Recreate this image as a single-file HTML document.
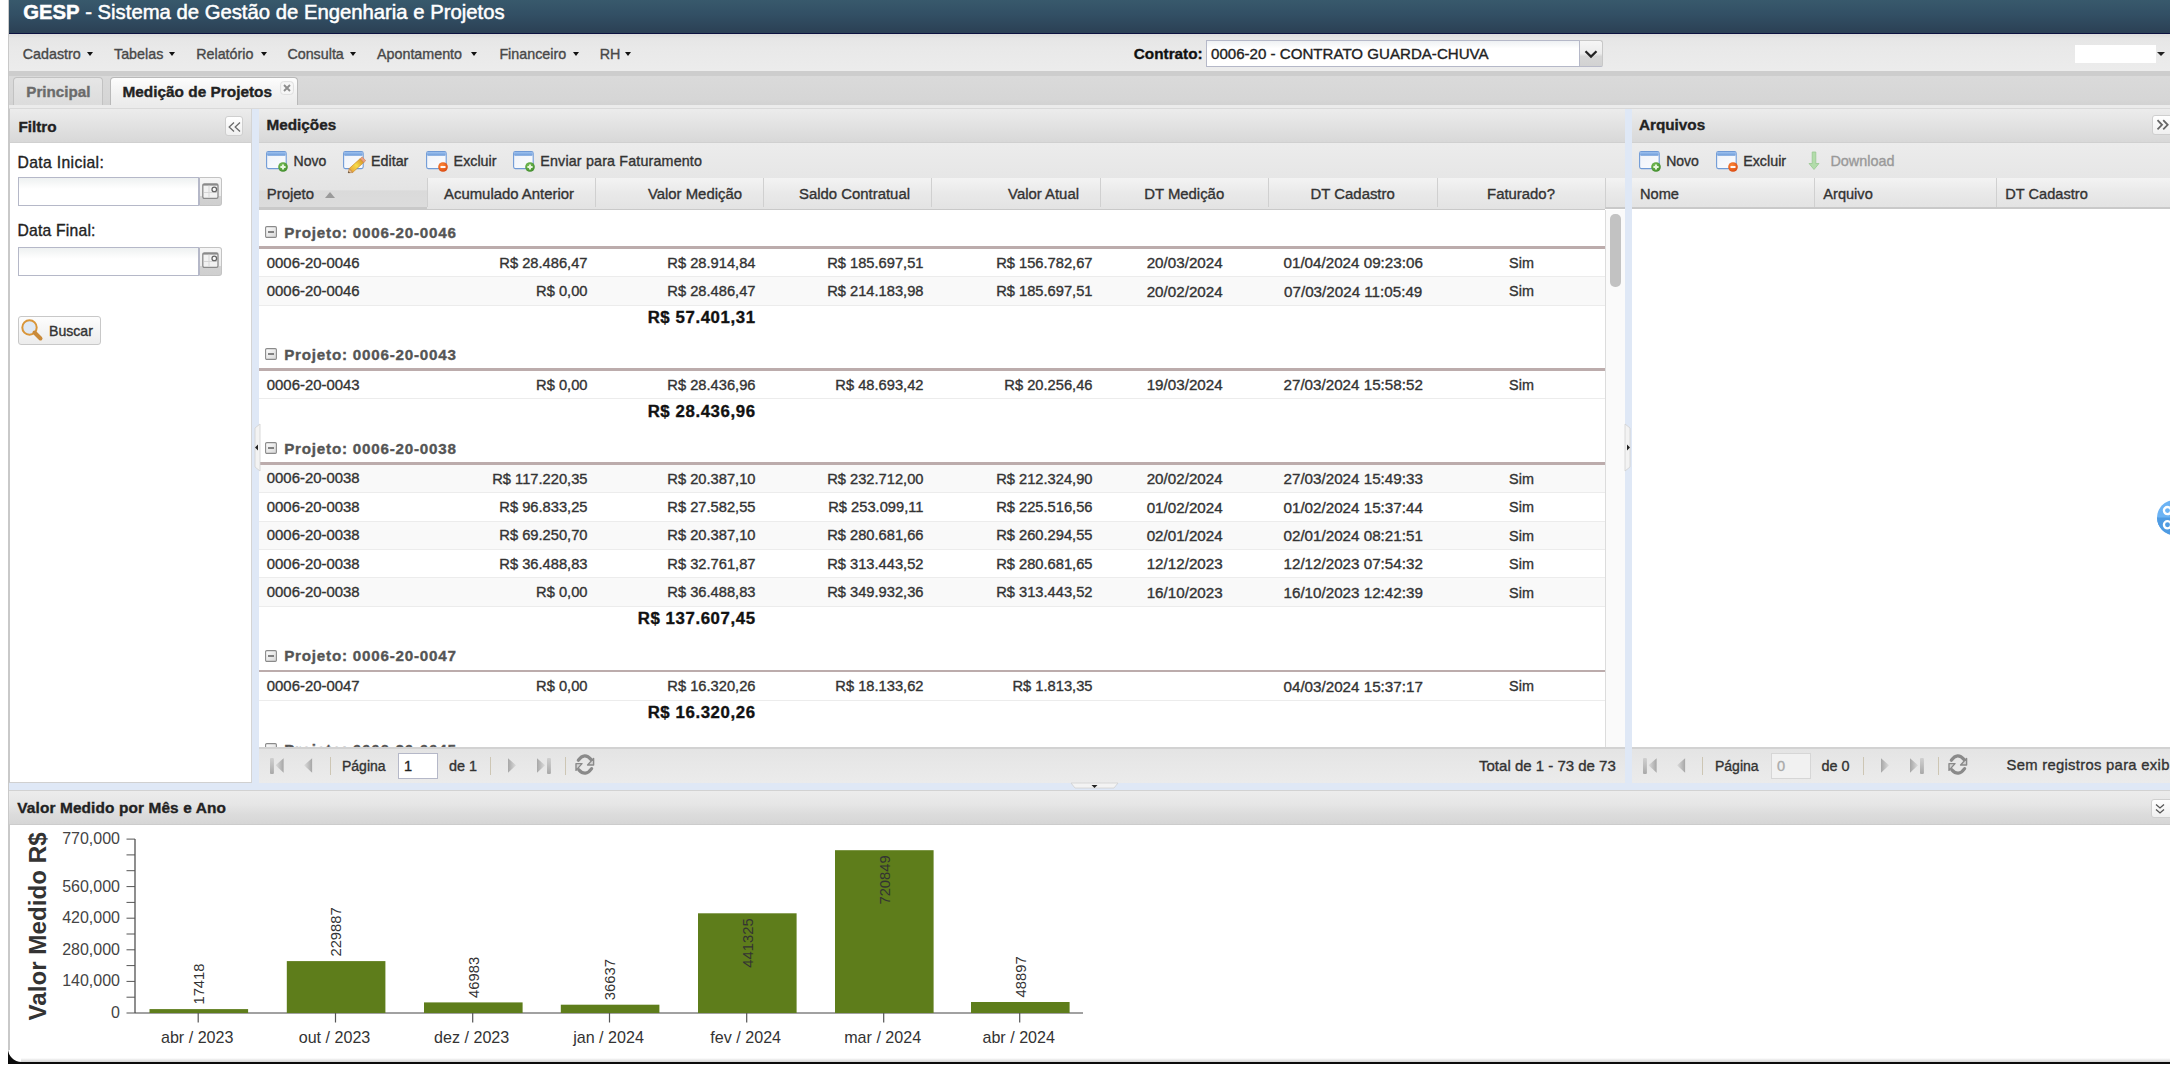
<!DOCTYPE html>
<html><head><meta charset="utf-8"><title>GESP</title>
<style>
html,body{margin:0;padding:0;}
body{width:2170px;height:1070px;position:relative;overflow:hidden;background:#fff;font-family:"Liberation Sans", sans-serif;}
.t{position:absolute;white-space:nowrap;-webkit-text-stroke:0.35px currentColor;}
.b{position:absolute;}
svg.b{overflow:visible;}
</style></head><body>
<div class="b" style="left:8.00px;top:0.00px;width:2162.00px;height:1064.00px;background:#0b0b0b;"></div>
<div class="b" style="left:8px;top:0;width:2162px;height:1061.6px;background:#fff;border-bottom-left-radius:13.5px;overflow:hidden;">
</div>
<div class="b" style="left:21.00px;top:1057.50px;width:2149.00px;height:4.10px;background:linear-gradient(#fff,#d2d2d2);"></div>
<div class="b" style="left:8.00px;top:0.00px;width:2.00px;height:1050.00px;background:#c9c9c9;"></div>
<div class="b" style="left:9.00px;top:0.00px;width:2161.00px;height:34.00px;background:linear-gradient(#38596c,#324f64 45%,#2b4054);border-bottom:1.5px solid #0c1240;box-sizing:border-box;"></div>
<div class="t" style="top:0.39px;font-size:20.3px;line-height:24.36px;color:#fff;left:23.20px;-webkit-text-stroke:0.5px #fff;"><b>GESP</b> - Sistema de Gestão de Engenharia e Projetos</div>
<div class="b" style="left:9.00px;top:34.00px;width:2161.00px;height:37.00px;background:linear-gradient(#dcdcdc,#e6e6e6 12%,#e9e9e9 40%,#ececec);"></div>
<div class="t" style="top:45.77px;font-size:14.3px;line-height:17.16px;color:#484848;left:22.80px;">Cadastro</div>
<div class="b" style="left:86.7px;top:52.2px;width:0;height:0;border-left:3.5px solid transparent;border-right:3.5px solid transparent;border-top:4px solid #111;"></div>
<div class="t" style="top:45.77px;font-size:14.3px;line-height:17.16px;color:#484848;left:114.00px;">Tabelas</div>
<div class="b" style="left:168.8px;top:52.2px;width:0;height:0;border-left:3.5px solid transparent;border-right:3.5px solid transparent;border-top:4px solid #111;"></div>
<div class="t" style="top:45.77px;font-size:14.3px;line-height:17.16px;color:#484848;left:196.20px;">Relatório</div>
<div class="b" style="left:261px;top:52.2px;width:0;height:0;border-left:3.5px solid transparent;border-right:3.5px solid transparent;border-top:4px solid #111;"></div>
<div class="t" style="top:45.77px;font-size:14.3px;line-height:17.16px;color:#484848;left:287.40px;">Consulta</div>
<div class="b" style="left:349.8px;top:52.2px;width:0;height:0;border-left:3.5px solid transparent;border-right:3.5px solid transparent;border-top:4px solid #111;"></div>
<div class="t" style="top:45.77px;font-size:14.3px;line-height:17.16px;color:#484848;left:377.00px;">Apontamento</div>
<div class="b" style="left:471.4px;top:52.2px;width:0;height:0;border-left:3.5px solid transparent;border-right:3.5px solid transparent;border-top:4px solid #111;"></div>
<div class="t" style="top:45.77px;font-size:14.3px;line-height:17.16px;color:#484848;left:499.40px;">Financeiro</div>
<div class="b" style="left:573px;top:52.2px;width:0;height:0;border-left:3.5px solid transparent;border-right:3.5px solid transparent;border-top:4px solid #111;"></div>
<div class="t" style="top:45.77px;font-size:14.3px;line-height:17.16px;color:#484848;left:599.80px;">RH</div>
<div class="b" style="left:625px;top:52.2px;width:0;height:0;border-left:3.5px solid transparent;border-right:3.5px solid transparent;border-top:4px solid #111;"></div>
<div class="t" style="top:44.92px;font-size:15.3px;line-height:18.36px;color:#111;font-weight:bold;left:1133.80px;">Contrato:</div>
<div class="b" style="left:1205.70px;top:40.40px;width:374.00px;height:26.20px;background:linear-gradient(#eef1f3,#fff 30%);border:1px solid #b5b8c8;border-right:none;box-sizing:border-box;"></div>
<div class="t" style="top:45.31px;font-size:15.1px;line-height:18.12px;color:#222;left:1211.00px;">0006-20 - CONTRATO GUARDA-CHUVA</div>
<div class="b" style="left:1579.20px;top:40.40px;width:23.50px;height:26.20px;background:linear-gradient(#f6f6f6,#ececec 50%,#d6d6d6 62%,#d2d2d2);border:1px solid #c8c8c8;border-left:1px solid #b5b8c8;border-bottom:1px solid #b8bac8;border-radius:0 3px 2px 0;box-sizing:border-box;"></div>
<svg class="b" style="left:1583.5px;top:49px" width="14" height="10" viewBox="0 0 14 10"><path d="M1.5 2.2 L7 7.6 L12.5 2.2" fill="none" stroke="#222" stroke-width="2.2"/></svg>
<div class="b" style="left:2075.00px;top:44.60px;width:80.50px;height:18.50px;background:#fff;"></div>
<div class="b" style="left:2157px;top:52px;width:0;height:0;border-left:4px solid transparent;border-right:4px solid transparent;border-top:4.5px solid #222;"></div>
<div class="b" style="left:9.00px;top:71.00px;width:2161.00px;height:4.50px;background:#cdcdcd;"></div>
<div class="b" style="left:9.00px;top:75.50px;width:2161.00px;height:29.50px;background:linear-gradient(#dadada,#d6d6d6 80%,#d2d2d2);"></div>
<div class="b" style="left:9.00px;top:104.60px;width:2161.00px;height:3.40px;background:#ebebeb;"></div>
<div class="b" style="left:9.00px;top:107.80px;width:2161.00px;height:1.20px;background:#d9d9d9;"></div>
<div class="b" style="left:12.50px;top:77.00px;width:90.70px;height:27.60px;background:linear-gradient(#e6e6e6,#dcdcdc);border:1px solid #c2c2c2;border-bottom:none;border-radius:4px 4px 0 0;box-sizing:border-box;"></div>
<div class="t" style="top:82.91px;font-size:15.2px;line-height:18.24px;color:#6b6b6b;font-weight:bold;left:26.30px;">Principal</div>
<div class="b" style="left:109.90px;top:76.80px;width:188.40px;height:27.80px;background:linear-gradient(#fdfdfd,#f1f1f1 60%,#ebebeb);border:1.2px solid #b9b9b9;border-bottom:none;border-radius:4px 4px 0 0;box-sizing:border-box;"></div>
<div class="t" style="top:82.72px;font-size:15.4px;line-height:18.48px;color:#222;font-weight:bold;left:122.40px;">Medição de Projetos</div>
<svg class="b" style="left:280.2px;top:81.3px" width="14" height="14" viewBox="0 0 14 14"><rect x="0.6" y="0.6" width="12.8" height="12.8" rx="3" fill="#f6f6f6" stroke="#dedede" stroke-width="1"/><path d="M4 4 L10 10 M10 4 L4 10" stroke="#8d8d8d" stroke-width="1.9"/></svg>
<div class="b" style="left:9.00px;top:109.00px;width:2161.00px;height:682.00px;background:#dfe8f6;"></div>
<div class="b" style="left:9.00px;top:109.00px;width:242.50px;height:674.00px;background:#fff;border-left:1px solid #c9c9c9;border-bottom:1.5px solid #d0d0d0;border-right:1px solid #d4d4d4;box-sizing:border-box;"></div>
<div class="b" style="left:10.00px;top:109.00px;width:241.00px;height:34.30px;background:linear-gradient(#ececec,#e2e2e2 50%,#d8d8d8);border-bottom:1px solid #d0d0d0;box-sizing:border-box;"></div>
<div class="t" style="top:118.02px;font-size:15.3px;line-height:18.36px;color:#222;font-weight:bold;left:18.40px;">Filtro</div>
<div class="b" style="left:225.00px;top:116.00px;width:18.40px;height:20.00px;background:linear-gradient(#fff,#f0f0f0);border:1px solid #cfcfcf;border-radius:3px;box-sizing:border-box;"></div>
<svg class="b" style="left:227.5px;top:121.5px" width="13" height="10" viewBox="0 0 13 10"><path d="M6 0.5 L1.2 5 L6 9.5 M12 0.5 L7.2 5 L12 9.5" fill="none" stroke="#6a6a6a" stroke-width="1.3"/></svg>
<div class="t" style="top:153.64px;font-size:15.7px;line-height:18.84px;color:#222;letter-spacing:0.35px;left:17.60px;">Data Inicial:</div>
<div class="t" style="top:222.14px;font-size:15.7px;line-height:18.84px;color:#222;letter-spacing:0.2px;left:17.60px;">Data Final:</div>
<div class="b" style="left:17.60px;top:177.00px;width:181.50px;height:29.20px;background:linear-gradient(#eef1f1,#fff 40%);border:1px solid #b5b8c8;box-sizing:border-box;"></div>
<div class="b" style="left:198.50px;top:177.00px;width:23.80px;height:29.20px;background:linear-gradient(#f6f6f6,#ececec 66%,#d2d2d2 68%,#cfcfcf);border:1px solid #c3c3c3;border-left:1px solid #b5b8c8;border-radius:0 3px 3px 0;box-sizing:border-box;"></div>
<svg class="b" style="left:202px;top:182.8px" width="17" height="16" viewBox="0 0 17 16"><rect x="0.8" y="0.8" width="15.2" height="14.6" rx="1.6" fill="#f2f2f2" stroke="#8a8a8a" stroke-width="1.3"/><rect x="1" y="1" width="15" height="1.6" fill="#8a8a8a"/><path d="M7 2.6 V15 M2 9.5 H15" stroke="#d6d6d6" stroke-width="1"/><circle cx="12.3" cy="6.4" r="2.3" fill="#fafafa" stroke="#666" stroke-width="1.3"/></svg>
<div class="b" style="left:17.60px;top:246.60px;width:181.50px;height:29.20px;background:linear-gradient(#eef1f1,#fff 40%);border:1px solid #b5b8c8;box-sizing:border-box;"></div>
<div class="b" style="left:198.50px;top:246.60px;width:23.80px;height:29.20px;background:linear-gradient(#f6f6f6,#ececec 66%,#d2d2d2 68%,#cfcfcf);border:1px solid #c3c3c3;border-left:1px solid #b5b8c8;border-radius:0 3px 3px 0;box-sizing:border-box;"></div>
<svg class="b" style="left:202px;top:252.4px" width="17" height="16" viewBox="0 0 17 16"><rect x="0.8" y="0.8" width="15.2" height="14.6" rx="1.6" fill="#f2f2f2" stroke="#8a8a8a" stroke-width="1.3"/><rect x="1" y="1" width="15" height="1.6" fill="#8a8a8a"/><path d="M7 2.6 V15 M2 9.5 H15" stroke="#d6d6d6" stroke-width="1"/><circle cx="12.3" cy="6.4" r="2.3" fill="#fafafa" stroke="#666" stroke-width="1.3"/></svg>
<div class="b" style="left:17.60px;top:315.50px;width:83.30px;height:29.50px;background:linear-gradient(#fdfdfd,#ececec);border:1px solid #c8c8c8;border-radius:3px;box-sizing:border-box;"></div>
<svg class="b" style="left:20px;top:318px" width="24" height="24" viewBox="0 0 24 24"><circle cx="9.5" cy="9.5" r="7.2" fill="#dfe9f5" stroke="#d9963a" stroke-width="2"/><path d="M14.5 14.5 L20.5 20.5" stroke="#c98a3a" stroke-width="4" stroke-linecap="round"/></svg>
<div class="t" style="top:322.95px;font-size:14.1px;line-height:16.92px;color:#333;left:49.00px;">Buscar</div>
<svg class="b" style="left:251.5px;top:424px" width="8" height="47" viewBox="0 0 8 47"><path d="M8 0 L3 4 L3 43 L8 47 Z" fill="#f3f3f3" stroke="#d0d0d0" stroke-width="0.8"/><path d="M3 23.5 L6 20.5 L6 26.5 Z" fill="#222"/></svg>
<svg class="b" style="left:1625px;top:424px" width="8" height="47" viewBox="0 0 8 47"><path d="M0 0 L5 4 L5 43 L0 47 Z" fill="#f3f3f3" stroke="#d0d0d0" stroke-width="0.8"/><path d="M5 23.5 L2 20.5 L2 26.5 Z" fill="#222"/></svg>
<div class="b" style="left:259.00px;top:109.00px;width:1366.00px;height:674.00px;background:#fff;"></div>
<div class="b" style="left:259.00px;top:109.00px;width:1366.00px;height:33.80px;background:linear-gradient(#ececec,#e2e2e2 50%,#d8d8d8);border-bottom:1px solid #d0d0d0;box-sizing:border-box;"></div>
<div class="t" style="top:115.52px;font-size:15.3px;line-height:18.36px;color:#222;font-weight:bold;left:266.50px;">Medições</div>
<div class="b" style="left:259.00px;top:142.80px;width:1366.00px;height:35.60px;background:linear-gradient(#ececec,#e6e6e6);"></div>
<svg class="b" style="left:265.9px;top:151.2px" width="26" height="22" viewBox="0 0 26 22"><defs><linearGradient id="wg" x1="0" y1="0" x2="1" y2="1"><stop offset="0" stop-color="#eef2f9"/><stop offset="1" stop-color="#fbfcfe"/></linearGradient><linearGradient id="wt" x1="0" y1="0" x2="0" y2="1"><stop offset="0" stop-color="#9cc0ee"/><stop offset="1" stop-color="#6b9ad8"/></linearGradient><radialGradient id="gb" cx="0.4" cy="0.35" r="0.7"><stop offset="0" stop-color="#7cc25a"/><stop offset="1" stop-color="#3d8a2a"/></radialGradient><radialGradient id="rb" cx="0.4" cy="0.35" r="0.7"><stop offset="0" stop-color="#ff8a3a"/><stop offset="1" stop-color="#d8460e"/></radialGradient><linearGradient id="pc" x1="0" y1="0" x2="1" y2="0"><stop offset="0" stop-color="#e9a83a"/><stop offset="0.5" stop-color="#f6dc4a"/><stop offset="1" stop-color="#d99a2a"/></linearGradient></defs><rect x="0.6" y="0.6" width="19.6" height="17" rx="1.8" fill="url(#wg)" stroke="#6f9ad6" stroke-width="1.1"/><rect x="1.1" y="1.1" width="18.6" height="3.6" rx="1" fill="url(#wt)"/><circle cx="17" cy="16" r="4.8" fill="url(#gb)"/><path d="M14.4 16 H19.6 M17 13.4 V18.6" stroke="#e8f6e0" stroke-width="1.9"/></svg>
<div class="t" style="top:153.05px;font-size:14.0px;line-height:16.8px;color:#333;left:293.60px;">Novo</div>
<svg class="b" style="left:343.0px;top:151.2px" width="26" height="22" viewBox="0 0 26 22"><defs><linearGradient id="wg" x1="0" y1="0" x2="1" y2="1"><stop offset="0" stop-color="#eef2f9"/><stop offset="1" stop-color="#fbfcfe"/></linearGradient><linearGradient id="wt" x1="0" y1="0" x2="0" y2="1"><stop offset="0" stop-color="#9cc0ee"/><stop offset="1" stop-color="#6b9ad8"/></linearGradient><radialGradient id="gb" cx="0.4" cy="0.35" r="0.7"><stop offset="0" stop-color="#7cc25a"/><stop offset="1" stop-color="#3d8a2a"/></radialGradient><radialGradient id="rb" cx="0.4" cy="0.35" r="0.7"><stop offset="0" stop-color="#ff8a3a"/><stop offset="1" stop-color="#d8460e"/></radialGradient><linearGradient id="pc" x1="0" y1="0" x2="1" y2="0"><stop offset="0" stop-color="#e9a83a"/><stop offset="0.5" stop-color="#f6dc4a"/><stop offset="1" stop-color="#d99a2a"/></linearGradient></defs><rect x="0.6" y="0.6" width="19.6" height="17" rx="1.8" fill="url(#wg)" stroke="#6f9ad6" stroke-width="1.1"/><rect x="1.1" y="1.1" width="18.6" height="3.6" rx="1" fill="url(#wt)"/><g transform="translate(13.8,14.2) rotate(-42)"><rect x="-8" y="-2.6" width="15" height="5.2" fill="url(#pc)" stroke="#c8862a" stroke-width="0.6"/><path d="M-8 -2.6 L-11.5 0 L-8 2.6 Z" fill="#e8c090" stroke="#b07030" stroke-width="0.5"/><path d="M-11.5 0 L-10.2 -1 L-10.2 1 Z" fill="#333"/><rect x="7" y="-2.6" width="2.6" height="5.2" fill="#f0a080" stroke="#c08050" stroke-width="0.5"/></g></svg>
<div class="t" style="top:152.77px;font-size:14.3px;line-height:17.16px;color:#333;left:371.00px;">Editar</div>
<svg class="b" style="left:425.9px;top:151.2px" width="26" height="22" viewBox="0 0 26 22"><defs><linearGradient id="wg" x1="0" y1="0" x2="1" y2="1"><stop offset="0" stop-color="#eef2f9"/><stop offset="1" stop-color="#fbfcfe"/></linearGradient><linearGradient id="wt" x1="0" y1="0" x2="0" y2="1"><stop offset="0" stop-color="#9cc0ee"/><stop offset="1" stop-color="#6b9ad8"/></linearGradient><radialGradient id="gb" cx="0.4" cy="0.35" r="0.7"><stop offset="0" stop-color="#7cc25a"/><stop offset="1" stop-color="#3d8a2a"/></radialGradient><radialGradient id="rb" cx="0.4" cy="0.35" r="0.7"><stop offset="0" stop-color="#ff8a3a"/><stop offset="1" stop-color="#d8460e"/></radialGradient><linearGradient id="pc" x1="0" y1="0" x2="1" y2="0"><stop offset="0" stop-color="#e9a83a"/><stop offset="0.5" stop-color="#f6dc4a"/><stop offset="1" stop-color="#d99a2a"/></linearGradient></defs><rect x="0.6" y="0.6" width="19.6" height="17" rx="1.8" fill="url(#wg)" stroke="#6f9ad6" stroke-width="1.1"/><rect x="1.1" y="1.1" width="18.6" height="3.6" rx="1" fill="url(#wt)"/><circle cx="17" cy="16" r="4.8" fill="url(#rb)"/><path d="M14.5 16 H19.5" stroke="#fff" stroke-width="1.9"/></svg>
<div class="t" style="top:152.77px;font-size:14.3px;line-height:17.16px;color:#333;left:453.60px;">Excluir</div>
<svg class="b" style="left:512.8px;top:151.2px" width="26" height="22" viewBox="0 0 26 22"><defs><linearGradient id="wg" x1="0" y1="0" x2="1" y2="1"><stop offset="0" stop-color="#eef2f9"/><stop offset="1" stop-color="#fbfcfe"/></linearGradient><linearGradient id="wt" x1="0" y1="0" x2="0" y2="1"><stop offset="0" stop-color="#9cc0ee"/><stop offset="1" stop-color="#6b9ad8"/></linearGradient><radialGradient id="gb" cx="0.4" cy="0.35" r="0.7"><stop offset="0" stop-color="#7cc25a"/><stop offset="1" stop-color="#3d8a2a"/></radialGradient><radialGradient id="rb" cx="0.4" cy="0.35" r="0.7"><stop offset="0" stop-color="#ff8a3a"/><stop offset="1" stop-color="#d8460e"/></radialGradient><linearGradient id="pc" x1="0" y1="0" x2="1" y2="0"><stop offset="0" stop-color="#e9a83a"/><stop offset="0.5" stop-color="#f6dc4a"/><stop offset="1" stop-color="#d99a2a"/></linearGradient></defs><rect x="0.6" y="0.6" width="19.6" height="17" rx="1.8" fill="url(#wg)" stroke="#6f9ad6" stroke-width="1.1"/><rect x="1.1" y="1.1" width="18.6" height="3.6" rx="1" fill="url(#wt)"/><circle cx="17" cy="16" r="4.8" fill="url(#gb)"/><path d="M14.4 16 H19.6 M17 13.4 V18.6" stroke="#e8f6e0" stroke-width="1.9"/></svg>
<div class="t" style="top:152.77px;font-size:14.3px;line-height:17.16px;color:#333;letter-spacing:0.16px;left:540.30px;">Enviar para Faturamento</div>
<div class="b" style="left:259.00px;top:178.40px;width:1346.00px;height:31.40px;background:linear-gradient(#f3f3f3,#e9e9e9 50%,#e3e3e3);border-bottom:1.6px solid #c9c9c9;box-sizing:border-box;"></div>
<div class="b" style="left:1605.00px;top:178.40px;width:20.00px;height:31.10px;background:linear-gradient(#f3f3f3,#e9e9e9 50%,#e3e3e3);border-bottom:2px solid #c9c9c9;box-sizing:border-box;"></div>
<div class="b" style="left:259.00px;top:178.40px;width:168.00px;height:31.10px;background:linear-gradient(#e6e6e6,#e4e4e4 40%,#dadada 45%,#dcdcdc);border-bottom:2px solid #c9c9c9;box-sizing:border-box;"></div>
<div class="b" style="left:426.50px;top:178.40px;width:1.00px;height:29.00px;background:#d0d0d0;"></div>
<div class="b" style="left:594.50px;top:178.40px;width:1.00px;height:29.00px;background:#d0d0d0;"></div>
<div class="b" style="left:762.50px;top:178.40px;width:1.00px;height:29.00px;background:#d0d0d0;"></div>
<div class="b" style="left:930.50px;top:178.40px;width:1.00px;height:29.00px;background:#d0d0d0;"></div>
<div class="b" style="left:1099.50px;top:178.40px;width:1.00px;height:29.00px;background:#d0d0d0;"></div>
<div class="b" style="left:1267.90px;top:178.40px;width:1.00px;height:29.00px;background:#d0d0d0;"></div>
<div class="b" style="left:1436.50px;top:178.40px;width:1.00px;height:29.00px;background:#d0d0d0;"></div>
<div class="b" style="left:1604.50px;top:178.40px;width:1.00px;height:29.00px;background:#d0d0d0;"></div>
<div class="t" style="top:185.50px;font-size:14.9px;line-height:17.88px;color:#333;left:266.80px;">Projeto</div>
<div class="t" style="top:185.50px;font-size:14.9px;line-height:17.88px;color:#333;left:-26.00px;width:600px;text-align:right;">Acumulado Anterior</div>
<div class="t" style="top:185.50px;font-size:14.9px;line-height:17.88px;color:#333;left:142.00px;width:600px;text-align:right;">Valor Medição</div>
<div class="t" style="top:185.50px;font-size:14.9px;line-height:17.88px;color:#333;left:310.00px;width:600px;text-align:right;">Saldo Contratual</div>
<div class="t" style="top:185.50px;font-size:14.9px;line-height:17.88px;color:#333;left:479.00px;width:600px;text-align:right;">Valor Atual</div>
<div class="t" style="top:185.50px;font-size:14.9px;line-height:17.88px;color:#333;left:884.20px;width:600px;text-align:center;">DT Medição</div>
<div class="t" style="top:185.50px;font-size:14.9px;line-height:17.88px;color:#333;left:1052.70px;width:600px;text-align:center;">DT Cadastro</div>
<div class="t" style="top:185.50px;font-size:14.9px;line-height:17.88px;color:#333;left:1221.00px;width:600px;text-align:center;">Faturado?</div>
<div class="b" style="left:325.4px;top:192px;width:0;height:0;border-left:5px solid transparent;border-right:5px solid transparent;border-bottom:6px solid #9a9a9a;"></div>
<div class="b" style="left:259px;top:209.5px;width:1346px;height:537.5px;overflow:hidden;background:#fff;">
<svg class="b" style="left:5.7px;top:16.7px" width="12" height="12" viewBox="0 0 12 12"><defs><linearGradient id="gi" x1="0" y1="0" x2="1" y2="1"><stop offset="0" stop-color="#fff"/><stop offset="1" stop-color="#d6d6d6"/></linearGradient></defs><rect x="0.6" y="0.6" width="10.8" height="10.8" rx="1.2" fill="url(#gi)" stroke="#8a8a8a" stroke-width="1.1"/><path d="M3 6 H9" stroke="#555" stroke-width="1.4"/></svg>
<div class="t" style="top:14.41px;font-size:15.2px;line-height:18.24px;color:#555;font-weight:bold;letter-spacing:0.78px;left:25.20px;">Projeto: 0006-20-0046</div>
<div class="b" style="left:0.00px;top:36.70px;width:1346.00px;height:2.60px;background:#bcacac;"></div>
<div class="b" style="left:0.00px;top:39.30px;width:1346.00px;height:28.45px;background:#fff;border-bottom:1px solid #ececec;box-sizing:border-box;"></div>
<div class="t" style="top:45.00px;font-size:14.9px;line-height:17.88px;color:#333;left:7.80px;">0006-20-0046</div>
<div class="t" style="top:45.19px;font-size:14.7px;line-height:17.64px;color:#333;left:-271.50px;width:600px;text-align:right;">R$ 28.486,47</div>
<div class="t" style="top:45.19px;font-size:14.7px;line-height:17.64px;color:#333;left:-103.50px;width:600px;text-align:right;">R$ 28.914,84</div>
<div class="t" style="top:45.19px;font-size:14.7px;line-height:17.64px;color:#333;left:64.50px;width:600px;text-align:right;">R$ 185.697,51</div>
<div class="t" style="top:45.19px;font-size:14.7px;line-height:17.64px;color:#333;left:233.50px;width:600px;text-align:right;">R$ 156.782,67</div>
<div class="t" style="top:44.71px;font-size:15.2px;line-height:18.24px;color:#333;left:625.70px;width:600px;text-align:center;">20/03/2024</div>
<div class="t" style="top:44.71px;font-size:15.2px;line-height:18.24px;color:#333;left:794.20px;width:600px;text-align:center;">01/04/2024 09:23:06</div>
<div class="t" style="top:45.47px;font-size:14.4px;line-height:17.28px;color:#333;left:962.50px;width:600px;text-align:center;">Sim</div>
<div class="b" style="left:0.00px;top:67.75px;width:1346.00px;height:28.45px;background:#f9f9f9;border-bottom:1px solid #ececec;box-sizing:border-box;"></div>
<div class="t" style="top:73.45px;font-size:14.9px;line-height:17.88px;color:#333;left:7.80px;">0006-20-0046</div>
<div class="t" style="top:73.64px;font-size:14.7px;line-height:17.64px;color:#333;left:-271.50px;width:600px;text-align:right;">R$ 0,00</div>
<div class="t" style="top:73.64px;font-size:14.7px;line-height:17.64px;color:#333;left:-103.50px;width:600px;text-align:right;">R$ 28.486,47</div>
<div class="t" style="top:73.64px;font-size:14.7px;line-height:17.64px;color:#333;left:64.50px;width:600px;text-align:right;">R$ 214.183,98</div>
<div class="t" style="top:73.64px;font-size:14.7px;line-height:17.64px;color:#333;left:233.50px;width:600px;text-align:right;">R$ 185.697,51</div>
<div class="t" style="top:73.16px;font-size:15.2px;line-height:18.24px;color:#333;left:625.70px;width:600px;text-align:center;">20/02/2024</div>
<div class="t" style="top:73.16px;font-size:15.2px;line-height:18.24px;color:#333;left:794.20px;width:600px;text-align:center;">07/03/2024 11:05:49</div>
<div class="t" style="top:73.92px;font-size:14.4px;line-height:17.28px;color:#333;left:962.50px;width:600px;text-align:center;">Sim</div>
<div class="t" style="top:98.60px;font-size:16.8px;line-height:20.16px;color:#111;font-weight:bold;letter-spacing:0.6px;left:-103.40px;width:600px;text-align:right;">R$ 57.401,31</div>
<svg class="b" style="left:5.7px;top:138.8px" width="12" height="12" viewBox="0 0 12 12"><defs><linearGradient id="gi" x1="0" y1="0" x2="1" y2="1"><stop offset="0" stop-color="#fff"/><stop offset="1" stop-color="#d6d6d6"/></linearGradient></defs><rect x="0.6" y="0.6" width="10.8" height="10.8" rx="1.2" fill="url(#gi)" stroke="#8a8a8a" stroke-width="1.1"/><path d="M3 6 H9" stroke="#555" stroke-width="1.4"/></svg>
<div class="t" style="top:136.56px;font-size:15.2px;line-height:18.24px;color:#555;font-weight:bold;letter-spacing:0.78px;left:25.20px;">Projeto: 0006-20-0043</div>
<div class="b" style="left:0.00px;top:158.85px;width:1346.00px;height:2.60px;background:#bcacac;"></div>
<div class="b" style="left:0.00px;top:161.45px;width:1346.00px;height:28.45px;background:#fff;border-bottom:1px solid #ececec;box-sizing:border-box;"></div>
<div class="t" style="top:167.15px;font-size:14.9px;line-height:17.88px;color:#333;left:7.80px;">0006-20-0043</div>
<div class="t" style="top:167.34px;font-size:14.7px;line-height:17.64px;color:#333;left:-271.50px;width:600px;text-align:right;">R$ 0,00</div>
<div class="t" style="top:167.34px;font-size:14.7px;line-height:17.64px;color:#333;left:-103.50px;width:600px;text-align:right;">R$ 28.436,96</div>
<div class="t" style="top:167.34px;font-size:14.7px;line-height:17.64px;color:#333;left:64.50px;width:600px;text-align:right;">R$ 48.693,42</div>
<div class="t" style="top:167.34px;font-size:14.7px;line-height:17.64px;color:#333;left:233.50px;width:600px;text-align:right;">R$ 20.256,46</div>
<div class="t" style="top:166.86px;font-size:15.2px;line-height:18.24px;color:#333;left:625.70px;width:600px;text-align:center;">19/03/2024</div>
<div class="t" style="top:166.86px;font-size:15.2px;line-height:18.24px;color:#333;left:794.20px;width:600px;text-align:center;">27/03/2024 15:58:52</div>
<div class="t" style="top:167.62px;font-size:14.4px;line-height:17.28px;color:#333;left:962.50px;width:600px;text-align:center;">Sim</div>
<div class="t" style="top:192.30px;font-size:16.8px;line-height:20.16px;color:#111;font-weight:bold;letter-spacing:0.6px;left:-103.40px;width:600px;text-align:right;">R$ 28.436,96</div>
<svg class="b" style="left:5.7px;top:232.5px" width="12" height="12" viewBox="0 0 12 12"><defs><linearGradient id="gi" x1="0" y1="0" x2="1" y2="1"><stop offset="0" stop-color="#fff"/><stop offset="1" stop-color="#d6d6d6"/></linearGradient></defs><rect x="0.6" y="0.6" width="10.8" height="10.8" rx="1.2" fill="url(#gi)" stroke="#8a8a8a" stroke-width="1.1"/><path d="M3 6 H9" stroke="#555" stroke-width="1.4"/></svg>
<div class="t" style="top:230.26px;font-size:15.2px;line-height:18.24px;color:#555;font-weight:bold;letter-spacing:0.78px;left:25.20px;">Projeto: 0006-20-0038</div>
<div class="b" style="left:0.00px;top:252.55px;width:1346.00px;height:2.60px;background:#bcacac;"></div>
<div class="b" style="left:0.00px;top:255.15px;width:1346.00px;height:28.45px;background:#f9f9f9;border-bottom:1px solid #ececec;box-sizing:border-box;"></div>
<div class="t" style="top:260.85px;font-size:14.9px;line-height:17.88px;color:#333;left:7.80px;">0006-20-0038</div>
<div class="t" style="top:261.04px;font-size:14.7px;line-height:17.64px;color:#333;left:-271.50px;width:600px;text-align:right;">R$ 117.220,35</div>
<div class="t" style="top:261.04px;font-size:14.7px;line-height:17.64px;color:#333;left:-103.50px;width:600px;text-align:right;">R$ 20.387,10</div>
<div class="t" style="top:261.04px;font-size:14.7px;line-height:17.64px;color:#333;left:64.50px;width:600px;text-align:right;">R$ 232.712,00</div>
<div class="t" style="top:261.04px;font-size:14.7px;line-height:17.64px;color:#333;left:233.50px;width:600px;text-align:right;">R$ 212.324,90</div>
<div class="t" style="top:260.56px;font-size:15.2px;line-height:18.24px;color:#333;left:625.70px;width:600px;text-align:center;">20/02/2024</div>
<div class="t" style="top:260.56px;font-size:15.2px;line-height:18.24px;color:#333;left:794.20px;width:600px;text-align:center;">27/03/2024 15:49:33</div>
<div class="t" style="top:261.32px;font-size:14.4px;line-height:17.28px;color:#333;left:962.50px;width:600px;text-align:center;">Sim</div>
<div class="b" style="left:0.00px;top:283.60px;width:1346.00px;height:28.45px;background:#fff;border-bottom:1px solid #ececec;box-sizing:border-box;"></div>
<div class="t" style="top:289.30px;font-size:14.9px;line-height:17.88px;color:#333;left:7.80px;">0006-20-0038</div>
<div class="t" style="top:289.49px;font-size:14.7px;line-height:17.64px;color:#333;left:-271.50px;width:600px;text-align:right;">R$ 96.833,25</div>
<div class="t" style="top:289.49px;font-size:14.7px;line-height:17.64px;color:#333;left:-103.50px;width:600px;text-align:right;">R$ 27.582,55</div>
<div class="t" style="top:289.49px;font-size:14.7px;line-height:17.64px;color:#333;left:64.50px;width:600px;text-align:right;">R$ 253.099,11</div>
<div class="t" style="top:289.49px;font-size:14.7px;line-height:17.64px;color:#333;left:233.50px;width:600px;text-align:right;">R$ 225.516,56</div>
<div class="t" style="top:289.01px;font-size:15.2px;line-height:18.24px;color:#333;left:625.70px;width:600px;text-align:center;">01/02/2024</div>
<div class="t" style="top:289.01px;font-size:15.2px;line-height:18.24px;color:#333;left:794.20px;width:600px;text-align:center;">01/02/2024 15:37:44</div>
<div class="t" style="top:289.77px;font-size:14.4px;line-height:17.28px;color:#333;left:962.50px;width:600px;text-align:center;">Sim</div>
<div class="b" style="left:0.00px;top:312.05px;width:1346.00px;height:28.45px;background:#f9f9f9;border-bottom:1px solid #ececec;box-sizing:border-box;"></div>
<div class="t" style="top:317.75px;font-size:14.9px;line-height:17.88px;color:#333;left:7.80px;">0006-20-0038</div>
<div class="t" style="top:317.94px;font-size:14.7px;line-height:17.64px;color:#333;left:-271.50px;width:600px;text-align:right;">R$ 69.250,70</div>
<div class="t" style="top:317.94px;font-size:14.7px;line-height:17.64px;color:#333;left:-103.50px;width:600px;text-align:right;">R$ 20.387,10</div>
<div class="t" style="top:317.94px;font-size:14.7px;line-height:17.64px;color:#333;left:64.50px;width:600px;text-align:right;">R$ 280.681,66</div>
<div class="t" style="top:317.94px;font-size:14.7px;line-height:17.64px;color:#333;left:233.50px;width:600px;text-align:right;">R$ 260.294,55</div>
<div class="t" style="top:317.46px;font-size:15.2px;line-height:18.24px;color:#333;left:625.70px;width:600px;text-align:center;">02/01/2024</div>
<div class="t" style="top:317.46px;font-size:15.2px;line-height:18.24px;color:#333;left:794.20px;width:600px;text-align:center;">02/01/2024 08:21:51</div>
<div class="t" style="top:318.22px;font-size:14.4px;line-height:17.28px;color:#333;left:962.50px;width:600px;text-align:center;">Sim</div>
<div class="b" style="left:0.00px;top:340.50px;width:1346.00px;height:28.45px;background:#fff;border-bottom:1px solid #ececec;box-sizing:border-box;"></div>
<div class="t" style="top:346.20px;font-size:14.9px;line-height:17.88px;color:#333;left:7.80px;">0006-20-0038</div>
<div class="t" style="top:346.39px;font-size:14.7px;line-height:17.64px;color:#333;left:-271.50px;width:600px;text-align:right;">R$ 36.488,83</div>
<div class="t" style="top:346.39px;font-size:14.7px;line-height:17.64px;color:#333;left:-103.50px;width:600px;text-align:right;">R$ 32.761,87</div>
<div class="t" style="top:346.39px;font-size:14.7px;line-height:17.64px;color:#333;left:64.50px;width:600px;text-align:right;">R$ 313.443,52</div>
<div class="t" style="top:346.39px;font-size:14.7px;line-height:17.64px;color:#333;left:233.50px;width:600px;text-align:right;">R$ 280.681,65</div>
<div class="t" style="top:345.91px;font-size:15.2px;line-height:18.24px;color:#333;left:625.70px;width:600px;text-align:center;">12/12/2023</div>
<div class="t" style="top:345.91px;font-size:15.2px;line-height:18.24px;color:#333;left:794.20px;width:600px;text-align:center;">12/12/2023 07:54:32</div>
<div class="t" style="top:346.67px;font-size:14.4px;line-height:17.28px;color:#333;left:962.50px;width:600px;text-align:center;">Sim</div>
<div class="b" style="left:0.00px;top:368.95px;width:1346.00px;height:28.45px;background:#f9f9f9;border-bottom:1px solid #ececec;box-sizing:border-box;"></div>
<div class="t" style="top:374.65px;font-size:14.9px;line-height:17.88px;color:#333;left:7.80px;">0006-20-0038</div>
<div class="t" style="top:374.84px;font-size:14.7px;line-height:17.64px;color:#333;left:-271.50px;width:600px;text-align:right;">R$ 0,00</div>
<div class="t" style="top:374.84px;font-size:14.7px;line-height:17.64px;color:#333;left:-103.50px;width:600px;text-align:right;">R$ 36.488,83</div>
<div class="t" style="top:374.84px;font-size:14.7px;line-height:17.64px;color:#333;left:64.50px;width:600px;text-align:right;">R$ 349.932,36</div>
<div class="t" style="top:374.84px;font-size:14.7px;line-height:17.64px;color:#333;left:233.50px;width:600px;text-align:right;">R$ 313.443,52</div>
<div class="t" style="top:374.36px;font-size:15.2px;line-height:18.24px;color:#333;left:625.70px;width:600px;text-align:center;">16/10/2023</div>
<div class="t" style="top:374.36px;font-size:15.2px;line-height:18.24px;color:#333;left:794.20px;width:600px;text-align:center;">16/10/2023 12:42:39</div>
<div class="t" style="top:375.12px;font-size:14.4px;line-height:17.28px;color:#333;left:962.50px;width:600px;text-align:center;">Sim</div>
<div class="t" style="top:399.80px;font-size:16.8px;line-height:20.16px;color:#111;font-weight:bold;letter-spacing:0.6px;left:-103.40px;width:600px;text-align:right;">R$ 137.607,45</div>
<svg class="b" style="left:5.7px;top:440.1px" width="12" height="12" viewBox="0 0 12 12"><defs><linearGradient id="gi" x1="0" y1="0" x2="1" y2="1"><stop offset="0" stop-color="#fff"/><stop offset="1" stop-color="#d6d6d6"/></linearGradient></defs><rect x="0.6" y="0.6" width="10.8" height="10.8" rx="1.2" fill="url(#gi)" stroke="#8a8a8a" stroke-width="1.1"/><path d="M3 6 H9" stroke="#555" stroke-width="1.4"/></svg>
<div class="t" style="top:437.76px;font-size:15.2px;line-height:18.24px;color:#555;font-weight:bold;letter-spacing:0.78px;left:25.20px;">Projeto: 0006-20-0047</div>
<div class="b" style="left:0.00px;top:460.05px;width:1346.00px;height:2.60px;background:#bcacac;"></div>
<div class="b" style="left:0.00px;top:462.65px;width:1346.00px;height:28.45px;background:#fff;border-bottom:1px solid #ececec;box-sizing:border-box;"></div>
<div class="t" style="top:468.35px;font-size:14.9px;line-height:17.88px;color:#333;left:7.80px;">0006-20-0047</div>
<div class="t" style="top:468.54px;font-size:14.7px;line-height:17.64px;color:#333;left:-271.50px;width:600px;text-align:right;">R$ 0,00</div>
<div class="t" style="top:468.54px;font-size:14.7px;line-height:17.64px;color:#333;left:-103.50px;width:600px;text-align:right;">R$ 16.320,26</div>
<div class="t" style="top:468.54px;font-size:14.7px;line-height:17.64px;color:#333;left:64.50px;width:600px;text-align:right;">R$ 18.133,62</div>
<div class="t" style="top:468.54px;font-size:14.7px;line-height:17.64px;color:#333;left:233.50px;width:600px;text-align:right;">R$ 1.813,35</div>
<div class="t" style="top:468.06px;font-size:15.2px;line-height:18.24px;color:#333;left:794.20px;width:600px;text-align:center;">04/03/2024 15:37:17</div>
<div class="t" style="top:468.82px;font-size:14.4px;line-height:17.28px;color:#333;left:962.50px;width:600px;text-align:center;">Sim</div>
<div class="t" style="top:493.50px;font-size:16.8px;line-height:20.16px;color:#111;font-weight:bold;letter-spacing:0.6px;left:-103.40px;width:600px;text-align:right;">R$ 16.320,26</div>
<svg class="b" style="left:5.7px;top:533.8px" width="12" height="12" viewBox="0 0 12 12"><defs><linearGradient id="gi" x1="0" y1="0" x2="1" y2="1"><stop offset="0" stop-color="#fff"/><stop offset="1" stop-color="#d6d6d6"/></linearGradient></defs><rect x="0.6" y="0.6" width="10.8" height="10.8" rx="1.2" fill="url(#gi)" stroke="#8a8a8a" stroke-width="1.1"/><path d="M3 6 H9" stroke="#555" stroke-width="1.4"/></svg>
<div class="t" style="top:531.46px;font-size:15.2px;line-height:18.24px;color:#555;font-weight:bold;letter-spacing:0.78px;left:25.20px;">Projeto: 0006-20-0045</div>
<div class="b" style="left:0.00px;top:553.75px;width:1346.00px;height:2.60px;background:#bcacac;"></div>
</div>
<div class="b" style="left:1605.00px;top:209.50px;width:20.00px;height:537.50px;background:#fafafa;border-left:1px solid #dcdcdc;box-sizing:border-box;"></div>
<div class="b" style="left:1610.00px;top:213.90px;width:10.60px;height:73.50px;background:#c2c2c2;border-radius:5px;"></div>
<div class="b" style="left:259.00px;top:747.00px;width:1366.00px;height:36.40px;background:linear-gradient(#e4e4e4,#e8e8e8 50%,#ebebeb);border-top:2px solid #d2d2d2;box-sizing:border-box;"></div>
<svg class="b" style="left:270.0px;top:757.8px" width="16" height="17" viewBox="0 0 16 17"><defs><linearGradient id="pgb" x1="0" y1="0" x2="0" y2="1"><stop offset="0" stop-color="#d0d0d0"/><stop offset="1" stop-color="#a9a9a9"/></linearGradient><linearGradient id="pgt" x1="0" y1="0" x2="1" y2="0"><stop offset="0" stop-color="#dcdcdc"/><stop offset="1" stop-color="#a6a6a6"/></linearGradient><linearGradient id="pgr" x1="1" y1="0" x2="0" y2="0"><stop offset="0" stop-color="#dcdcdc"/><stop offset="1" stop-color="#a6a6a6"/></linearGradient></defs><rect x="0" y="0" width="3.9" height="16" rx="1" fill="url(#pgb)"/><path d="M13.6 0.2 L5.5 7.3 L13.6 14.7 Z" fill="url(#pgt)"/></svg>
<svg class="b" style="left:303.7px;top:757.8px" width="10" height="16" viewBox="0 0 10 16"><path d="M8.1 0.2 L0 7.3 L8.1 14.7 Z" fill="url(#pgt)"/></svg>
<div class="b" style="left:330.00px;top:757.00px;width:1.20px;height:18.00px;background:#cdc6b4;"></div>
<div class="t" style="top:758.25px;font-size:14.0px;line-height:16.8px;color:#333;left:342.00px;">Página</div>
<div class="b" style="left:397.80px;top:752.80px;width:40.20px;height:26.20px;background:#fff;border:1px solid #b5b8c8;box-sizing:border-box;"></div>
<div class="t" style="top:757.68px;font-size:14.6px;line-height:17.52px;color:#222;left:404.00px;">1</div>
<div class="t" style="top:757.87px;font-size:14.4px;line-height:17.28px;color:#333;left:449.00px;">de 1</div>
<div class="b" style="left:490.30px;top:757.00px;width:1.20px;height:18.00px;background:#cdc6b4;"></div>
<svg class="b" style="left:507.6px;top:757.8px" width="10" height="16" viewBox="0 0 10 16"><path d="M0 0.2 L8.1 7.3 L0 14.7 Z" fill="url(#pgr)"/></svg>
<svg class="b" style="left:537.0px;top:757.8px" width="16" height="17" viewBox="0 0 16 17"><path d="M0 0.2 L8.1 7.3 L0 14.7 Z" fill="url(#pgr)"/><rect x="10" y="0" width="3.9" height="16" rx="1" fill="url(#pgb)"/></svg>
<div class="b" style="left:564.50px;top:757.00px;width:1.20px;height:18.00px;background:#cdc6b4;"></div>
<svg class="b" style="left:568.0px;top:750.0px" width="34" height="32" viewBox="0 0 34 32"><path d="M10.3 10.2 Q16.5 1.8 23.2 9.6" fill="none" stroke="#8a8a8a" stroke-width="3.2" stroke-linecap="round"/><path d="M19.6 15 L25.6 15 L25.6 8.4 Z" fill="#d2d2d2" stroke="#8a8a8a" stroke-width="1.4" stroke-linejoin="round"/><path d="M23.6 18.6 Q17.5 27 10.8 19.8" fill="none" stroke="#8a8a8a" stroke-width="3.2" stroke-linecap="round"/><path d="M14 13.6 L8 13.6 L8 20.4 Z" fill="#d2d2d2" stroke="#8a8a8a" stroke-width="1.4" stroke-linejoin="round"/></svg>
<div class="t" style="top:757.30px;font-size:15.0px;line-height:18.0px;color:#333;left:1015.80px;width:600px;text-align:right;">Total de 1 - 73 de 73</div>
<div class="b" style="left:1632.00px;top:109.00px;width:538.00px;height:674.00px;background:#fff;"></div>
<div class="b" style="left:1632.00px;top:109.00px;width:538.00px;height:33.80px;background:linear-gradient(#ececec,#e2e2e2 50%,#d8d8d8);border-bottom:1px solid #d0d0d0;box-sizing:border-box;"></div>
<div class="t" style="top:115.52px;font-size:15.3px;line-height:18.36px;color:#222;font-weight:bold;left:1638.90px;">Arquivos</div>
<div class="b" style="left:2151.60px;top:114.60px;width:22.00px;height:20.60px;background:linear-gradient(#fff,#f0f0f0);border:1px solid #cfcfcf;border-radius:3px;box-sizing:border-box;"></div>
<svg class="b" style="left:2156px;top:119px" width="14" height="12" viewBox="0 0 14 12"><path d="M1.5 1.2 L6 5.8 L1.5 10.4 M7.2 1.2 L11.7 5.8 L7.2 10.4" fill="none" stroke="#666" stroke-width="1.8"/></svg>
<div class="b" style="left:1632.00px;top:142.80px;width:538.00px;height:35.60px;background:linear-gradient(#ececec,#e6e6e6);"></div>
<svg class="b" style="left:1638.9px;top:151.2px" width="26" height="22" viewBox="0 0 26 22"><defs><linearGradient id="wg" x1="0" y1="0" x2="1" y2="1"><stop offset="0" stop-color="#eef2f9"/><stop offset="1" stop-color="#fbfcfe"/></linearGradient><linearGradient id="wt" x1="0" y1="0" x2="0" y2="1"><stop offset="0" stop-color="#9cc0ee"/><stop offset="1" stop-color="#6b9ad8"/></linearGradient><radialGradient id="gb" cx="0.4" cy="0.35" r="0.7"><stop offset="0" stop-color="#7cc25a"/><stop offset="1" stop-color="#3d8a2a"/></radialGradient><radialGradient id="rb" cx="0.4" cy="0.35" r="0.7"><stop offset="0" stop-color="#ff8a3a"/><stop offset="1" stop-color="#d8460e"/></radialGradient><linearGradient id="pc" x1="0" y1="0" x2="1" y2="0"><stop offset="0" stop-color="#e9a83a"/><stop offset="0.5" stop-color="#f6dc4a"/><stop offset="1" stop-color="#d99a2a"/></linearGradient></defs><rect x="0.6" y="0.6" width="19.6" height="17" rx="1.8" fill="url(#wg)" stroke="#6f9ad6" stroke-width="1.1"/><rect x="1.1" y="1.1" width="18.6" height="3.6" rx="1" fill="url(#wt)"/><circle cx="17" cy="16" r="4.8" fill="url(#gb)"/><path d="M14.4 16 H19.6 M17 13.4 V18.6" stroke="#e8f6e0" stroke-width="1.9"/></svg>
<div class="t" style="top:153.05px;font-size:14.0px;line-height:16.8px;color:#333;left:1666.20px;">Novo</div>
<svg class="b" style="left:1716.0px;top:151.2px" width="26" height="22" viewBox="0 0 26 22"><defs><linearGradient id="wg" x1="0" y1="0" x2="1" y2="1"><stop offset="0" stop-color="#eef2f9"/><stop offset="1" stop-color="#fbfcfe"/></linearGradient><linearGradient id="wt" x1="0" y1="0" x2="0" y2="1"><stop offset="0" stop-color="#9cc0ee"/><stop offset="1" stop-color="#6b9ad8"/></linearGradient><radialGradient id="gb" cx="0.4" cy="0.35" r="0.7"><stop offset="0" stop-color="#7cc25a"/><stop offset="1" stop-color="#3d8a2a"/></radialGradient><radialGradient id="rb" cx="0.4" cy="0.35" r="0.7"><stop offset="0" stop-color="#ff8a3a"/><stop offset="1" stop-color="#d8460e"/></radialGradient><linearGradient id="pc" x1="0" y1="0" x2="1" y2="0"><stop offset="0" stop-color="#e9a83a"/><stop offset="0.5" stop-color="#f6dc4a"/><stop offset="1" stop-color="#d99a2a"/></linearGradient></defs><rect x="0.6" y="0.6" width="19.6" height="17" rx="1.8" fill="url(#wg)" stroke="#6f9ad6" stroke-width="1.1"/><rect x="1.1" y="1.1" width="18.6" height="3.6" rx="1" fill="url(#wt)"/><circle cx="17" cy="16" r="4.8" fill="url(#rb)"/><path d="M14.5 16 H19.5" stroke="#fff" stroke-width="1.9"/></svg>
<div class="t" style="top:152.77px;font-size:14.3px;line-height:17.16px;color:#333;left:1743.20px;">Excluir</div>
<svg class="b" style="left:1807px;top:151px" width="14" height="20" viewBox="0 0 14 20"><path d="M5.2 1 H8.8 V12.5 H12 L7 18.5 L2 12.5 H5.2 Z" fill="#b2dcaa" stroke="#98c890" stroke-width="0.8"/></svg>
<div class="t" style="top:152.67px;font-size:14.4px;line-height:17.28px;color:#999;left:1830.40px;">Download</div>
<div class="b" style="left:1632.00px;top:178.40px;width:538.00px;height:31.10px;background:linear-gradient(#f3f3f3,#e9e9e9 50%,#e3e3e3);border-bottom:2px solid #c9c9c9;box-sizing:border-box;"></div>
<div class="b" style="left:1813.50px;top:178.40px;width:1.00px;height:29.00px;background:#d0d0d0;"></div>
<div class="b" style="left:1995.80px;top:178.40px;width:1.00px;height:29.00px;background:#d0d0d0;"></div>
<div class="t" style="top:185.78px;font-size:14.6px;line-height:17.52px;color:#333;left:1640.00px;">Nome</div>
<div class="t" style="top:185.78px;font-size:14.6px;line-height:17.52px;color:#333;left:1823.30px;">Arquivo</div>
<div class="t" style="top:185.78px;font-size:14.6px;line-height:17.52px;color:#333;left:2005.30px;">DT Cadastro</div>
<svg class="b" style="left:2150px;top:495px" width="20" height="45" viewBox="0 0 20 45"><defs><clipPath id="bc"><rect x="0" y="0" width="20" height="45"/></clipPath></defs><g clip-path="url(#bc)"><circle cx="24.4" cy="22.6" r="17.4" fill="#6cb3f4"/><path d="M7 22.6 A17.4 17.4 0 0 0 41.8 22.6 Z" fill="#4f9be2"/><circle cx="17.5" cy="15.6" r="3.6" fill="none" stroke="#fff" stroke-width="2.3"/><circle cx="17.5" cy="29.8" r="3.6" fill="none" stroke="#fff" stroke-width="2.3"/></g></svg>
<div class="b" style="left:1632.00px;top:747.00px;width:538.00px;height:36.40px;background:linear-gradient(#e4e4e4,#e8e8e8 50%,#ebebeb);border-top:2px solid #d2d2d2;box-sizing:border-box;"></div>
<svg class="b" style="left:1643.0px;top:757.8px" width="16" height="17" viewBox="0 0 16 17"><defs><linearGradient id="pgb" x1="0" y1="0" x2="0" y2="1"><stop offset="0" stop-color="#d0d0d0"/><stop offset="1" stop-color="#a9a9a9"/></linearGradient><linearGradient id="pgt" x1="0" y1="0" x2="1" y2="0"><stop offset="0" stop-color="#dcdcdc"/><stop offset="1" stop-color="#a6a6a6"/></linearGradient><linearGradient id="pgr" x1="1" y1="0" x2="0" y2="0"><stop offset="0" stop-color="#dcdcdc"/><stop offset="1" stop-color="#a6a6a6"/></linearGradient></defs><rect x="0" y="0" width="3.9" height="16" rx="1" fill="url(#pgb)"/><path d="M13.6 0.2 L5.5 7.3 L13.6 14.7 Z" fill="url(#pgt)"/></svg>
<svg class="b" style="left:1676.7px;top:757.8px" width="10" height="16" viewBox="0 0 10 16"><path d="M8.1 0.2 L0 7.3 L8.1 14.7 Z" fill="url(#pgt)"/></svg>
<div class="b" style="left:1702.20px;top:757.00px;width:1.20px;height:18.00px;background:#cdc6b4;"></div>
<div class="t" style="top:758.25px;font-size:14.0px;line-height:16.8px;color:#333;left:1715.00px;">Página</div>
<div class="b" style="left:1770.80px;top:752.80px;width:40.00px;height:26.20px;background:#f1f1f1;border:1px solid #d6d6d6;box-sizing:border-box;"></div>
<div class="t" style="top:757.68px;font-size:14.6px;line-height:17.52px;color:#aaa;left:1777.00px;">0</div>
<div class="t" style="top:757.87px;font-size:14.4px;line-height:17.28px;color:#333;left:1821.60px;">de 0</div>
<div class="b" style="left:1863.30px;top:757.00px;width:1.20px;height:18.00px;background:#cdc6b4;"></div>
<svg class="b" style="left:1880.6px;top:757.8px" width="10" height="16" viewBox="0 0 10 16"><path d="M0 0.2 L8.1 7.3 L0 14.7 Z" fill="url(#pgr)"/></svg>
<svg class="b" style="left:1909.5px;top:757.8px" width="16" height="17" viewBox="0 0 16 17"><path d="M0 0.2 L8.1 7.3 L0 14.7 Z" fill="url(#pgr)"/><rect x="10" y="0" width="3.9" height="16" rx="1" fill="url(#pgb)"/></svg>
<div class="b" style="left:1937.50px;top:757.00px;width:1.20px;height:18.00px;background:#cdc6b4;"></div>
<svg class="b" style="left:1941.0px;top:750.0px" width="34" height="32" viewBox="0 0 34 32"><path d="M10.3 10.2 Q16.5 1.8 23.2 9.6" fill="none" stroke="#8a8a8a" stroke-width="3.2" stroke-linecap="round"/><path d="M19.6 15 L25.6 15 L25.6 8.4 Z" fill="#d2d2d2" stroke="#8a8a8a" stroke-width="1.4" stroke-linejoin="round"/><path d="M23.6 18.6 Q17.5 27 10.8 19.8" fill="none" stroke="#8a8a8a" stroke-width="3.2" stroke-linecap="round"/><path d="M14 13.6 L8 13.6 L8 20.4 Z" fill="#d2d2d2" stroke="#8a8a8a" stroke-width="1.4" stroke-linejoin="round"/></svg>
<div class="t" style="top:757.49px;font-size:14.8px;line-height:17.76px;color:#333;letter-spacing:0.3px;left:2006.50px;">Sem registros para exibir</div>
<div class="b" style="left:251.50px;top:109.00px;width:7.50px;height:674.00px;background:#dfe8f6;"></div>
<div class="b" style="left:1625.00px;top:109.00px;width:7.00px;height:674.00px;background:#dfe8f6;"></div>
<svg class="b" style="left:251.5px;top:424px" width="8" height="47" viewBox="0 0 8 47"><path d="M8 0 L3 4 L3 43 L8 47 Z" fill="#f3f3f3" stroke="#d0d0d0" stroke-width="0.8"/><path d="M3 23.5 L6 20.5 L6 26.5 Z" fill="#222"/></svg>
<svg class="b" style="left:1625px;top:424px" width="8" height="47" viewBox="0 0 8 47"><path d="M0 0 L5 4 L5 43 L0 47 Z" fill="#f3f3f3" stroke="#d0d0d0" stroke-width="0.8"/><path d="M5 23.5 L2 20.5 L2 26.5 Z" fill="#222"/></svg>
<div class="b" style="left:9.00px;top:783.00px;width:2161.00px;height:7.50px;background:#dfe8f6;"></div>
<div class="b" style="left:9.00px;top:790.30px;width:2161.00px;height:1.20px;background:#d2d2d2;"></div>
<svg class="b" style="left:1071px;top:783px" width="47" height="8" viewBox="0 0 47 8"><path d="M0 0 L4 5 L43 5 L47 0 Z" fill="#f3f3f3" stroke="#d0d0d0" stroke-width="0.8"/><path d="M23.5 5 L20.5 2 L26.5 2 Z" fill="#222"/></svg>
<div class="b" style="left:9.00px;top:791.40px;width:2161.00px;height:33.60px;background:linear-gradient(#ececec,#e6e6e6 40%,#dcdcdc 70%,#d6d6d6);border-bottom:1px solid #cccccc;box-sizing:border-box;"></div>
<div class="t" style="top:799.22px;font-size:15.4px;line-height:18.48px;color:#222;font-weight:bold;letter-spacing:0.12px;left:17.30px;">Valor Medido por Mês e Ano</div>
<div class="b" style="left:2150.50px;top:799.00px;width:22.00px;height:18.50px;background:linear-gradient(#fff,#f0f0f0);border:1px solid #cfcfcf;border-radius:3px;box-sizing:border-box;"></div>
<svg class="b" style="left:2154px;top:801.5px" width="13" height="14" viewBox="0 0 13 14"><path d="M2 2.5 L6 6 L10 2.5 M2 7.5 L6 11 L10 7.5" fill="none" stroke="#555" stroke-width="1.3"/></svg>
<svg class="b" style="left:0;top:825px" width="1100" height="236" viewBox="0 825 1100 236"><line x1="135" y1="839.1" x2="135" y2="1013.0" stroke="#444" stroke-width="1.2"/><line x1="135" y1="1013.0" x2="1083" y2="1013.0" stroke="#444" stroke-width="1.2"/><line x1="126.5" y1="1013.0" x2="135" y2="1013.0" stroke="#555" stroke-width="1"/><line x1="126.5" y1="997.2" x2="135" y2="997.2" stroke="#555" stroke-width="1"/><line x1="126.5" y1="981.4" x2="135" y2="981.4" stroke="#555" stroke-width="1"/><line x1="126.5" y1="965.6" x2="135" y2="965.6" stroke="#555" stroke-width="1"/><line x1="126.5" y1="949.8" x2="135" y2="949.8" stroke="#555" stroke-width="1"/><line x1="126.5" y1="934.0" x2="135" y2="934.0" stroke="#555" stroke-width="1"/><line x1="126.5" y1="918.2" x2="135" y2="918.2" stroke="#555" stroke-width="1"/><line x1="126.5" y1="902.4" x2="135" y2="902.4" stroke="#555" stroke-width="1"/><line x1="126.5" y1="886.6" x2="135" y2="886.6" stroke="#555" stroke-width="1"/><line x1="126.5" y1="870.7" x2="135" y2="870.7" stroke="#555" stroke-width="1"/><line x1="126.5" y1="854.9" x2="135" y2="854.9" stroke="#555" stroke-width="1"/><line x1="126.5" y1="839.1" x2="135" y2="839.1" stroke="#555" stroke-width="1"/><text x="120" y="1018.0" text-anchor="end" font-family='"Liberation Sans", sans-serif' font-size="16" fill="#444">0</text><text x="120" y="986.4" text-anchor="end" font-family='"Liberation Sans", sans-serif' font-size="16" fill="#444">140,000</text><text x="120" y="954.8" text-anchor="end" font-family='"Liberation Sans", sans-serif' font-size="16" fill="#444">280,000</text><text x="120" y="923.2" text-anchor="end" font-family='"Liberation Sans", sans-serif' font-size="16" fill="#444">420,000</text><text x="120" y="891.6" text-anchor="end" font-family='"Liberation Sans", sans-serif' font-size="16" fill="#444">560,000</text><text x="120" y="844.1" text-anchor="end" font-family='"Liberation Sans", sans-serif' font-size="16" fill="#444">770,000</text><text transform="translate(46.3,926.5) rotate(-90)" text-anchor="middle" font-family='"Liberation Sans", sans-serif' font-size="24.2" font-weight="bold" fill="#333">Valor Medido R$</text><rect x="149.5" y="1009.1" width="98.6" height="3.9" fill="#5e7d1b"/><line x1="198.2" y1="1013.0" x2="198.2" y2="1022.5" stroke="#555" stroke-width="1.2"/><text x="197.2" y="1042.6" text-anchor="middle" font-family='"Liberation Sans", sans-serif' font-size="16.1" fill="#333">abr / 2023</text><text transform="translate(204.0,1004.6) rotate(-90)" text-anchor="start" font-family='"Liberation Sans", sans-serif' font-size="14.8" fill="#333">17418</text><rect x="286.8" y="961.1" width="98.6" height="51.9" fill="#5e7d1b"/><line x1="335.5" y1="1013.0" x2="335.5" y2="1022.5" stroke="#555" stroke-width="1.2"/><text x="334.5" y="1042.6" text-anchor="middle" font-family='"Liberation Sans", sans-serif' font-size="16.1" fill="#333">out / 2023</text><text transform="translate(341.3,956.6) rotate(-90)" text-anchor="start" font-family='"Liberation Sans", sans-serif' font-size="14.8" fill="#333">229887</text><rect x="424" y="1002.4" width="98.6" height="10.6" fill="#5e7d1b"/><line x1="472.7" y1="1013.0" x2="472.7" y2="1022.5" stroke="#555" stroke-width="1.2"/><text x="471.7" y="1042.6" text-anchor="middle" font-family='"Liberation Sans", sans-serif' font-size="16.1" fill="#333">dez / 2023</text><text transform="translate(478.5,997.9) rotate(-90)" text-anchor="start" font-family='"Liberation Sans", sans-serif' font-size="14.8" fill="#333">46983</text><rect x="560.8" y="1004.7" width="98.6" height="8.3" fill="#5e7d1b"/><line x1="609.5" y1="1013.0" x2="609.5" y2="1022.5" stroke="#555" stroke-width="1.2"/><text x="608.5" y="1042.6" text-anchor="middle" font-family='"Liberation Sans", sans-serif' font-size="16.1" fill="#333">jan / 2024</text><text transform="translate(615.3,1000.2) rotate(-90)" text-anchor="start" font-family='"Liberation Sans", sans-serif' font-size="14.8" fill="#333">36637</text><rect x="698" y="913.3" width="98.6" height="99.7" fill="#5e7d1b"/><line x1="746.7" y1="1013.0" x2="746.7" y2="1022.5" stroke="#555" stroke-width="1.2"/><text x="745.7" y="1042.6" text-anchor="middle" font-family='"Liberation Sans", sans-serif' font-size="16.1" fill="#333">fev / 2024</text><text transform="translate(752.5,918.3) rotate(-90)" text-anchor="end" font-family='"Liberation Sans", sans-serif' font-size="14.8" fill="#333">441325</text><rect x="835" y="850.2" width="98.6" height="162.8" fill="#5e7d1b"/><line x1="883.7" y1="1013.0" x2="883.7" y2="1022.5" stroke="#555" stroke-width="1.2"/><text x="882.7" y="1042.6" text-anchor="middle" font-family='"Liberation Sans", sans-serif' font-size="16.1" fill="#333">mar / 2024</text><text transform="translate(889.5,855.2) rotate(-90)" text-anchor="end" font-family='"Liberation Sans", sans-serif' font-size="14.8" fill="#333">720849</text><rect x="971" y="1002.0" width="98.6" height="11.0" fill="#5e7d1b"/><line x1="1019.7" y1="1013.0" x2="1019.7" y2="1022.5" stroke="#555" stroke-width="1.2"/><text x="1018.7" y="1042.6" text-anchor="middle" font-family='"Liberation Sans", sans-serif' font-size="16.1" fill="#333">abr / 2024</text><text transform="translate(1025.5,997.5) rotate(-90)" text-anchor="start" font-family='"Liberation Sans", sans-serif' font-size="14.8" fill="#333">48897</text></svg>
</body></html>
